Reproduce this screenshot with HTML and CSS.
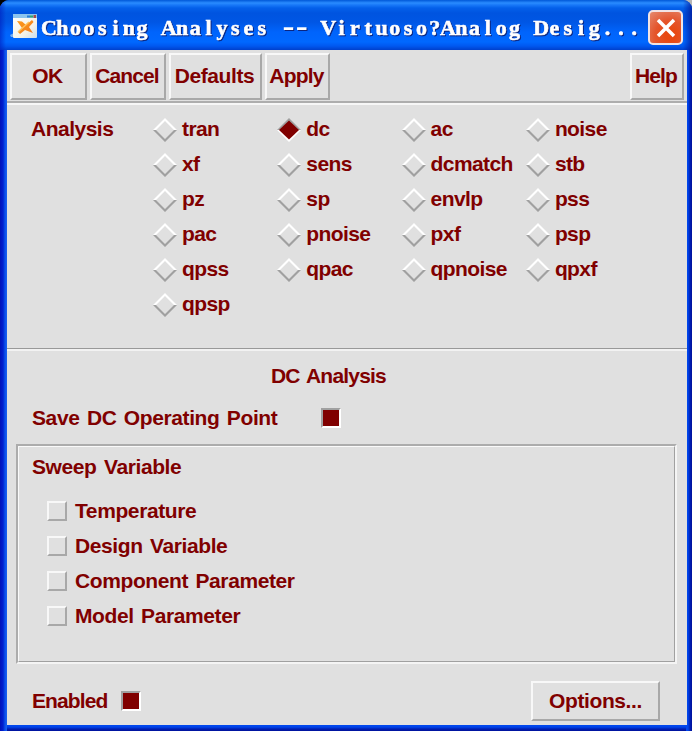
FILE: index.html
```html
<!DOCTYPE html>
<html lang="en">
<head>
<meta charset="utf-8">
<title>Choosing Analyses</title>
<link rel="stylesheet" href="styles.css">
</head>
<body>
<svg class="defs" width="0" height="0">
  <symbol id="dia" viewBox="0 0 24 26">
    <path class="hi" d="M0 13 12 1 24 13 21 13 12 4 3 13Z"/>
    <path class="lo" d="M0 13 3 13 12 22 21 13 24 13 12 25Z"/>
  </symbol>
  <symbol id="dia-on" viewBox="0 0 24 26">
    <path class="lo" d="M0 13 12 1 24 13Z"/>
    <path class="hi" d="M0 13 24 13 12 25Z"/>
    <path class="fill" d="M2 13 12 3.500 22 13 12 22.500Z"/>
  </symbol>
</svg>
<div class="window">
  <header class="titlebar">
    <svg class="app" width="28" height="26" viewBox="0 0 28 26">
      <defs>
        <linearGradient id="paper" x2="1" y2="1"><stop offset="0" stop-color="#fff"/><stop offset=".65" stop-color="#f4f2e8"/><stop offset="1" stop-color="#c9dced"/></linearGradient>
        <linearGradient id="bird" x2="1" y2="1"><stop offset="0" stop-color="#ff9a18"/><stop offset="1" stop-color="#ef7c20"/></linearGradient>
      </defs>
      <path d="M0 22 4 20V24H1Z" fill="#79aff0"/>
      <rect x="3" y="1" width="24" height="24" rx="1" fill="url(#paper)"/>
      <path d="M3 1H27V5H3Z" fill="#8cc4ee"/>
      <path d="M17 2.500H20V4.500H17Z" fill="#2a7fd4"/><path d="M20 2.500H23V4.500H20Z" fill="#32a86c"/><path d="M23.500 2H26V5H23.500Z" fill="#a34b4b"/>
      <path d="M7 8 12 8.500 16 12 22 7 23.500 9 19 14 23 20 15 17 10 21 8 19 12 15Z" fill="url(#bird)"/>
      <path d="M8 19 19 9" stroke="#ffc35a" stroke-width="1.500"/>
    </svg>
    <svg class="caption" width="606" height="40"><text y="31" x="12 25.3 38.6 51.9 65.2 78.5 91.8 105.1 118.4 131.7 145 158.3 171.6 184.9 198.2 211.5 224.8 238.1 251.4 264.7 278 291.3 304.6 317.9 331.2 344.5 357.8 371.1 384.4 397.7 411 424.3 437.6 450.9 464.2 477.5 490.8 504.1 517.4 530.7 544 557.3 570.6 583.9 597.2">Choosing Analyses <tspan class="dash" dy="1.500">--</tspan><tspan dy="-1.500"> </tspan>Virtuoso?Analog Desig...</text></svg>
    <button class="close" aria-label="Close"><svg width="20" height="20" viewBox="0 0 20 20"><path d="M2 2 18 18M18 2 2 18" stroke="#fff" stroke-width="3.500"/></svg></button>
  </header>
  <main class="client">
    <nav class="toolbar">
      <button class="btn ok">OK</button>
      <button class="btn cancel">Cancel</button>
      <button class="btn defaults">Defaults</button>
      <button class="btn apply">Apply</button>
      <button class="btn help">Help</button>
    </nav>
    <section class="analysis">
      <span class="head">Analysis</span>
      <div class="grid">
        <label><svg><use href="#dia"/></svg>tran</label><label><svg><use href="#dia-on"/></svg>dc</label><label><svg><use href="#dia"/></svg>ac</label><label><svg><use href="#dia"/></svg>noise</label>
        <label><svg><use href="#dia"/></svg>xf</label><label><svg><use href="#dia"/></svg>sens</label><label><svg><use href="#dia"/></svg>dcmatch</label><label><svg><use href="#dia"/></svg>stb</label>
        <label><svg><use href="#dia"/></svg>pz</label><label><svg><use href="#dia"/></svg>sp</label><label><svg><use href="#dia"/></svg>envlp</label><label><svg><use href="#dia"/></svg>pss</label>
        <label><svg><use href="#dia"/></svg>pac</label><label><svg><use href="#dia"/></svg>pnoise</label><label><svg><use href="#dia"/></svg>pxf</label><label><svg><use href="#dia"/></svg>psp</label>
        <label><svg><use href="#dia"/></svg>qpss</label><label><svg><use href="#dia"/></svg>qpac</label><label><svg><use href="#dia"/></svg>qpnoise</label><label><svg><use href="#dia"/></svg>qpxf</label>
        <label><svg><use href="#dia"/></svg>qpsp</label>
      </div>
    </section>
    <section class="dc">
      <h2>DC Analysis</h2>
      <div class="save"><span>Save DC Operating Point</span><i class="box on"></i></div>
      <div class="sweep">
        <div class="inner">
          <h3>Sweep Variable</h3>
          <label><i class="box"></i>Temperature</label>
          <label><i class="box"></i>Design Variable</label>
          <label><i class="box"></i>Component Parameter</label>
          <label><i class="box"></i>Model Parameter</label>
        </div>
      </div>
      <footer>
        <span class="enabled">Enabled</span><i class="box on"></i>
        <button class="btn options">Options...</button>
      </footer>
    </section>
  </main>
</div>
</body>
</html>
```
FILE: styles.css
```css
* { box-sizing: border-box; }
body { margin: 0; background: linear-gradient(90deg, #000 50%, #b5b5b5 50%); }
.defs { position: absolute; }
.hi { fill: #fff; }
.lo { fill: #a0a0a0; }
.fill { fill: #800000; }

.window {
  width: 692px;
  height: 731px;
  padding: 0 5px 6px 7px;
  border-radius: 9px 9px 0 0;
  background:
    linear-gradient(90deg, #0012b8 0, #0020d0 3px, #0a50ea 5px, #1a60f0 7px, transparent 7px) 0 50px no-repeat,
    linear-gradient(270deg, #00109a 0, #0020b4 2px, #0044ea 4px, #0048f0 6px, transparent 6px) 0 50px no-repeat,
    linear-gradient(0deg, #00109a 0, #0020b4 2px, #0044ea 4px, #0048f0 6px, transparent 6px),
    #0054e3;
  overflow: hidden;
}
.titlebar {
  height: 50px;
  margin: 0 -5px 0 -7px;
  padding: 10px 9px 0 10px;
  display: flex;
  align-items: flex-start;
  background:
    linear-gradient(90deg, rgba(0, 30, 190, .6), transparent 6px, transparent 683px, rgba(0, 20, 150, .75)),
    linear-gradient(#0058d8 0, #2a8cff 3px, #1878f8 5px, #0460ea 8px, #0054e0 13px, #0056e4 22px, #0064fc 32px, #0068ff 42px, #0058f0 46px, #0040cc 50px);
}
.app { flex: none; margin-top: 3px; }
.caption {
  flex: none;
  margin: -6px 0 0 -1px;
  overflow: visible;
  filter: drop-shadow(1.500px 1.500px .5px #0a2580);
}
.caption text {
  font: bold 22px "Liberation Serif", serif;
  text-anchor: middle;
  fill: #fff;
  stroke: #fff;
  stroke-width: .6px;
}
.caption .dash { font-size: 36px; font-weight: normal; stroke: none; }
.close {
  margin-left: 5px;
  width: 35px;
  height: 35px;
  flex: none;
  padding: 0;
  display: grid;
  place-items: center;
  border: 2px solid #f2e4e4;
  border-radius: 5px;
  background: radial-gradient(circle at 65% 75%, #e84810 15%, #e4552c 50%, #e58b70 100%);
}

.client {
  height: 675px;
  background: #e0e0e0;
  color: #800000;
  font: bold 21px/24px "Liberation Sans", Arial, sans-serif;
  letter-spacing: -.4px;
  word-spacing: 2px;
  white-space: nowrap;
}
.btn {
  font: inherit;
  letter-spacing: inherit;
  color: inherit;
  padding: 0;
  background: #e0e0e0;
  border: 2px solid;
  border-color: #f8f8f8 #a8a8a8 #a8a8a8 #f8f8f8;
}
.toolbar {
  height: 55px;
  padding: 3px 3px 0;
  display: flex;
  gap: 3px;
  border-bottom: 2px solid #f6f6f6;
  box-shadow: inset 0 -2px #adadad;
}
.toolbar .btn { height: 47px; padding: 0 2px 2px 0; }
.toolbar .ok { width: 77px; }
.toolbar .cancel { width: 76px; letter-spacing: -.9px; }
.toolbar .defaults { width: 93px; }
.toolbar .apply { width: 65px; letter-spacing: -.8px; }
.toolbar .help { width: 54px; margin-left: auto; letter-spacing: -.9px; }

.analysis {
  height: 244px;
  padding: 7px 0 0 24px;
  display: flex;
  border-bottom: 1px solid #999;
}
.head { width: 122px; padding-top: 5px; letter-spacing: -.5px; }
.grid {
  display: grid;
  grid-template-columns: repeat(4, 124.300px);
  grid-auto-rows: 35px;
  letter-spacing: -.6px;
}
.grid label { display: flex; align-items: center; gap: 5px; height: 34px; }
.grid svg { width: 24px; height: 26px; flex: none; margin-top: 2px; }

.dc { border-top: 2px solid #f2f2f2; }
h2, h3 { font: inherit; margin: 0; }
h2 { padding: 13px 0 0 264px; letter-spacing: -.8px; }
.save { display: flex; align-items: center; height: 24px; margin-top: 18px; padding-left: 25px; }
.save span { width: 289px; }
.box {
  width: 20px;
  height: 20px;
  flex: none;
  border: 2px solid;
  border-color: #f8f8f8 #a8a8a8 #a8a8a8 #f8f8f8;
}
.box.on { background: #800000; border-color: #a0a0a0 #fff #fff #a0a0a0; }
.sweep {
  width: 661px;
  height: 220px;
  margin: 14px 0 0 9px;
  border: 2px solid;
  border-color: #acacac #f4f4f4 #f4f4f4 #acacac;
}
.inner {
  height: 216px;
  padding: 8px 0 0 13px;
  border: 1px solid;
  border-color: #fafafa #a0a0a0 #a0a0a0 #fafafa;
}
.sweep h3 { margin-bottom: 14px; }
.sweep label { display: flex; align-items: center; height: 35px; padding-left: 15px; gap: 8px; }
footer { display: flex; align-items: center; height: 41px; margin-top: 16px; padding: 0 27px 0 25px; }
.enabled { width: 89px; letter-spacing: -.9px; }
.options { width: 129px; height: 40px; margin-left: auto; }
```
